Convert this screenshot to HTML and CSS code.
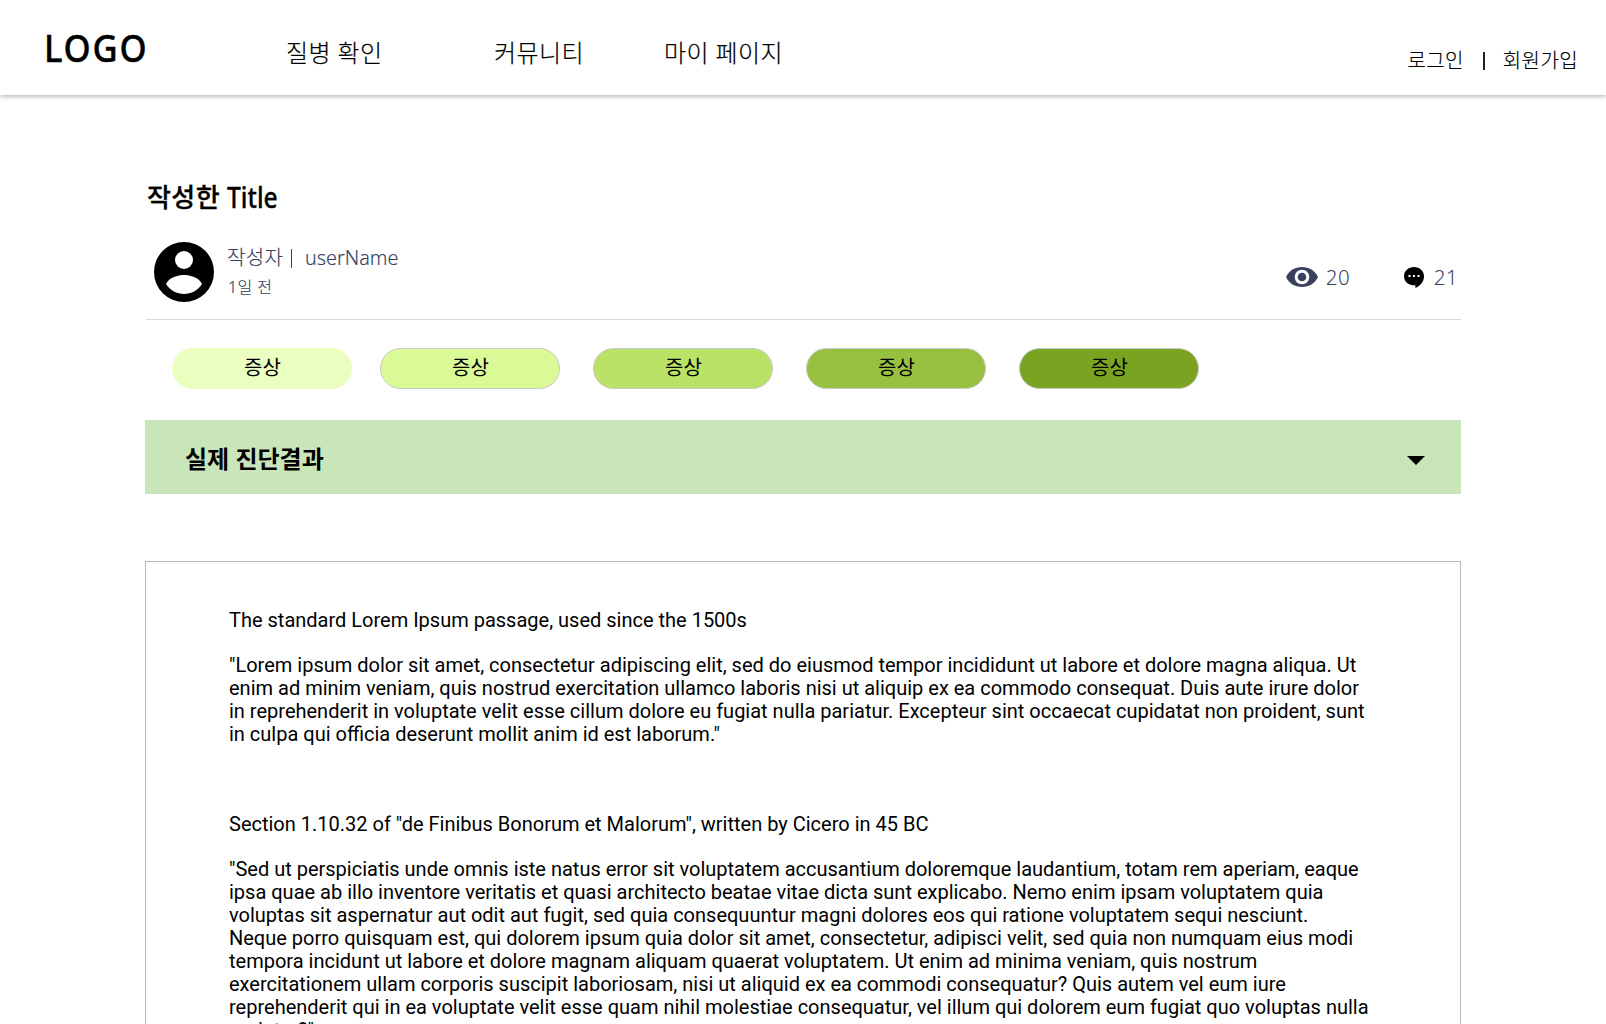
FILE: index.html
```html
<!DOCTYPE html>
<html lang="ko">
<head>
<meta charset="utf-8">
<title>작성한 Title</title>
<link rel="stylesheet" href="styles.css">
</head>
<body>
<header class="header">
  <a class="logo"><span class="logo-text">LOGO</span></a>
  <nav class="nav">
    <a class="nav-diagnosis">질병 확인</a>
    <a class="nav-community">커뮤니티</a>
    <a class="nav-mypage">마이 페이지</a>
  </nav>
  <div class="account"><a>로그인</a><span class="account-bar"></span><a>회원가입</a></div>
</header>
<main class="post">
  <h1 class="title">작성한 <span class="title-latin">Title</span></h1>
  <div class="meta">
    <svg class="avatar" viewBox="0 0 60 60"><circle cx="30" cy="30" r="30"/><circle cx="30" cy="18" r="9" fill="#fff"/><path d="M12 42C15 35.500 24 33 30 33S45 35.500 48 42C44 48.500 37 52 30 52S16 48.500 12 42Z" fill="#fff"/></svg>
    <div class="author">
      <div class="author-line"><span>작성자</span><span class="author-bar"></span><span class="username">userName</span></div>
      <div class="time">1일 전</div>
    </div>
    <div class="stats">
      <svg class="eye" viewBox="0 0 32 20"><path d="M0 10C3 3.500 9 0 16 0S29 3.500 32 10C29 16.500 23 20 16 20S3 16.500 0 10Z"/><circle cx="16" cy="10" r="7.300" fill="#fff"/><circle cx="16" cy="10" r="4.300"/></svg>
      <span class="views">20</span>
      <svg class="bubble" viewBox="0 0 20 21"><path d="M10 0C15.600 0 20 4 20 9.200C20 14 17 18.500 11.500 21L11.300 18.300C4.800 18.900 0 14.800 0 9.300C0 4 4.400 0 10 0Z"/><path d="M4.500 8h2v2h-2zM9 8h2v2H9zM13.500 8h2v2h-2z" fill="#fff"/></svg>
      <span class="comments">21</span>
    </div>
  </div>
  <div class="tags">
    <span class="tag tag-1">증상</span>
    <span class="tag tag-2">증상</span>
    <span class="tag tag-3">증상</span>
    <span class="tag tag-4">증상</span>
    <span class="tag tag-5">증상</span>
  </div>
  <div class="result"><h2 class="result-title">실제 진단결과</h2><svg class="caret" viewBox="0 0 18 9"><path d="M0 0H18L9 9Z"/></svg></div>
  <article class="content">
    <p>The standard Lorem Ipsum passage, used since the 1500s</p>
    <p>"Lorem ipsum dolor sit amet, consectetur adipiscing elit, sed do eiusmod tempor incididunt ut labore et dolore magna aliqua. Ut<br>enim ad minim veniam, quis nostrud exercitation ullamco laboris nisi ut aliquip ex ea commodo consequat. Duis aute irure dolor<br>in reprehenderit in voluptate velit esse cillum dolore eu fugiat nulla pariatur. Excepteur sint occaecat cupidatat non proident, sunt<br>in culpa qui officia deserunt mollit anim id est laborum."</p>
    <p class="section">Section 1.10.32 of "de Finibus Bonorum et Malorum", written by Cicero in 45 BC</p>
    <p>"Sed ut perspiciatis unde omnis iste natus error sit voluptatem accusantium doloremque laudantium, totam rem aperiam, eaque<br>ipsa quae ab illo inventore veritatis et quasi architecto beatae vitae dicta sunt explicabo. Nemo enim ipsam voluptatem quia<br>voluptas sit aspernatur aut odit aut fugit, sed quia consequuntur magni dolores eos qui ratione voluptatem sequi nesciunt.<br>Neque porro quisquam est, qui dolorem ipsum quia dolor sit amet, consectetur, adipisci velit, sed quia non numquam eius modi<br>tempora incidunt ut labore et dolore magnam aliquam quaerat voluptatem. Ut enim ad minima veniam, quis nostrum<br>exercitationem ullam corporis suscipit laboriosam, nisi ut aliquid ex ea commodi consequatur? Quis autem vel eum iure<br>reprehenderit qui in ea voluptate velit esse quam nihil molestiae consequatur, vel illum qui dolorem eum fugiat quo voluptas nulla<br>pariatur?"</p>
  </article>
</main>
</body>
</html>
```
FILE: styles.css
```css
* { box-sizing: border-box; }
html { height: 100%; overflow: hidden; }
body {
  margin: 0;
  height: 100%;
  overflow: hidden;
  background: #fff;
  color: #000;
  font-family: "Noto Sans", "Noto Sans CJK KR", sans-serif;
}
svg { display: block; flex: none; }

.header {
  display: flex;
  height: 95px;
  padding-left: 44px;
  box-shadow: 0 1px 5px rgba(0, 0, 0, .35);
  white-space: nowrap;
}
.logo { width: 242px; padding-top: 21px; font-size: 38.5px; font-weight: 500; line-height: 52px; -webkit-text-stroke: .4px #000; }
.logo-text { display: inline-block; transform: scaleX(.9); transform-origin: 0 50%; letter-spacing: 2px; }
.nav { display: flex; font-size: 24px; font-weight: 300; line-height: 36px; padding-top: 35px; letter-spacing: .4px; -webkit-text-stroke: .2px #000; }
.nav-diagnosis { width: 208px; }
.nav-community { width: 170px; }
.account { display: flex; margin-left: auto; padding: 46px 28px 0 0; font-size: 20px; font-weight: 300; line-height: 30px; letter-spacing: .4px; -webkit-text-stroke: .15px #000; }
.account-bar { width: 2px; height: 18px; margin: 6px 18px 6px 19px; background: #222; }

.post { width: 1316px; margin: 0 0 0 145px; }
.title { height: 122px; margin: 0; padding: 81px 0 0 2px; font-size: 26px; font-weight: 500; line-height: 40px; letter-spacing: .4px; white-space: nowrap; -webkit-text-stroke: .3px #000; }
.title-latin { display: inline-block; font-size: 28px; letter-spacing: 0; transform: translateY(1px) scaleX(.88); transform-origin: 0 50%; }
.meta { display: flex; height: 103px; padding: 25px 0 0 8px; margin-left: 1px; border-bottom: 1px solid #d9d9d9; color: #38415d; font-weight: 300; }
.avatar { width: 60px; height: 60px; fill: #000; }
.author { margin-left: 13px; -webkit-text-stroke: .15px #38415d; }
.author-line { display: flex; font-size: 20px; line-height: 32px; letter-spacing: .4px; }
.author-bar { width: 1px; height: 19px; margin: 7px 13px 0 8px; background: #38415d; }
.username { font-size: 20.5px; line-height: 31px; letter-spacing: 0; transform: scaleX(.965); transform-origin: 0 50%; }
.time { padding-left: 1px; font-size: 16px; line-height: 27px; letter-spacing: .4px; }
.stats { display: flex; align-items: center; height: 20px; margin: 25px 3px 0 auto; font-size: 20.5px; line-height: 20px; letter-spacing: .4px; }
.eye { width: 32px; height: 20px; fill: #38415d; }
.views { width: 78px; margin: -1px 0 0 8px; }
.bubble { width: 20px; height: 21px; fill: #000; }
.comments { margin: -1px 0 0 10px; }

.tags { display: flex; padding: 28px 0 0 27px; }
.tag { width: 180px; height: 41px; border: 1px solid #c9c9c9; border-radius: 21px; font-size: 20px; line-height: 37px; text-align: center; padding-left: 1px; margin-right: 33px; }
.tag-1 { background: #eaffc0; border-color: #eaffc0; margin-right: 28px; }
.tag-2 { background: #dafa97; }
.tag-3 { background: #b9e267; }
.tag-4 { background: #97c041; }
.tag-5 { background: #7aa322; }

.result { display: flex; align-items: center; justify-content: space-between; height: 74px; margin-top: 31px; padding: 0 36px 0 40px; background: #c9e6bb; }
.result-title { margin: 4px 0 0; font-size: 24px; font-weight: 700; line-height: 36px; }
.caret { width: 18px; height: 9px; margin-top: 7px; }

.content { height: 520px; margin-top: 67px; padding: 47px 0 0 83px; border: 1px solid #b9b9b9; font-family: Roboto, sans-serif; font-size: 20px; line-height: 23px; white-space: nowrap; }
.content p { margin: 0 0 22px; }
.content .section { margin-top: 67px; }
```
